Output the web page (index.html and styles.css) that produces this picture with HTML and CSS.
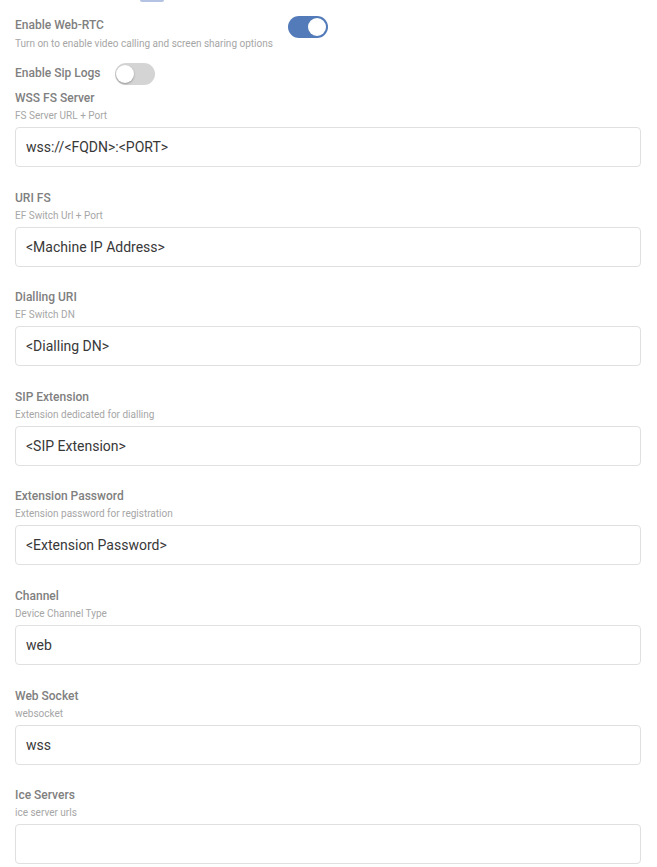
FILE: index.html
```html
<!DOCTYPE html>
<html lang="en">
<head>
  <meta charset="UTF-8" />
  <meta name="viewport" content="width=device-width, initial-scale=1" />
  <title>Web-RTC Settings</title>
  <link rel="stylesheet" href="styles.css">
</head>
<body>

<div class="settings">
  <div class="top-tab"></div>

  <div class="switch-row rtc">
    <div>
      <div class="label">Enable Web-RTC</div>
      <div class="hint">Turn on to enable video calling and screen sharing options</div>
    </div>
    <span class="toggle on"><span class="knob"></span></span>
  </div>

  <div class="switch-row logs">
    <div class="label">Enable Sip Logs</div>
    <span class="toggle"><span class="knob"></span></span>
  </div>

  <div class="field">
    <div class="label">WSS FS Server</div>
    <div class="hint">FS Server URL + Port</div>
    <input type="text" value="wss://<FQDN>:<PORT>">
  </div>

  <div class="field">
    <div class="label">URI FS</div>
    <div class="hint">EF Switch Url + Port</div>
    <input type="text" value="<Machine IP Address>">
  </div>

  <div class="field">
    <div class="label">Dialling URI</div>
    <div class="hint">EF Switch DN</div>
    <input type="text" value="<Dialling DN>">
  </div>

  <div class="field">
    <div class="label">SIP Extension</div>
    <div class="hint">Extension dedicated for dialling</div>
    <input type="text" value="<SIP Extension>">
  </div>

  <div class="field">
    <div class="label">Extension Password</div>
    <div class="hint">Extension password for registration</div>
    <input type="text" value="<Extension Password>">
  </div>

  <div class="field">
    <div class="label">Channel</div>
    <div class="hint">Device Channel Type</div>
    <input type="text" value="web">
  </div>

  <div class="field">
    <div class="label">Web Socket</div>
    <div class="hint">websocket</div>
    <input type="text" value="wss">
  </div>

  <div class="field">
    <div class="label">Ice Servers</div>
    <div class="hint">ice server urls</div>
    <input type="text" value="">
  </div>
</div>

</body>
</html>
```
FILE: styles.css
```css
body {
  margin: 0;
  background: #fff;
  font-family: Roboto, "Liberation Sans", sans-serif;
}
.settings {
  padding: 0 16px 0 15px;
}
.top-tab {
  width: 24px;
  height: 2px;
  margin-left: 125px;
  background-color: #b4c3e4;
  border-radius: 0 0 2px 2px;
}
.label {
  font-size: 12px;
  line-height: 16px;
  font-weight: 500;
  color: #808080;
}
.hint {
  font-size: 10px;
  line-height: 12px;
  color: #a6a6a6;
  margin-top: 5px;
}
.field .label {
  padding-top: 1px;
}
.field .hint {
  margin-top: 4px;
}
.switch-row {
  display: flex;
  align-items: flex-start;
}
.switch-row.rtc {
  margin-top: 15px;
}
.switch-row.rtc .toggle {
  margin-left: 15px;
  margin-top: -1px;
}
.switch-row.logs {
  margin-top: 13px;
  align-items: center;
}
.switch-row.logs .label {
  margin-top: -2px;
}
.switch-row.logs .toggle {
  margin-left: 15px;
}
.toggle {
  position: relative;
  display: inline-block;
  width: 40px;
  height: 22px;
  border-radius: 11px;
  background-color: #d4d4d4;
  flex-shrink: 0;
}
.toggle.on {
  background-color: #537bb9;
}
.knob {
  position: absolute;
  top: 2px;
  left: 1px;
  width: 18px;
  height: 18px;
  border-radius: 50%;
  background: #fff;
  box-shadow: 0 1px 2px rgba(0, 0, 0, 0.3);
}
.toggle.on .knob {
  left: 20px;
  box-shadow: none;
}
.field {
  margin-top: 4px;
  margin-bottom: 21.6px;
}
.field input {
  display: block;
  box-sizing: border-box;
  width: 100%;
  height: 40px;
  margin-top: 5px;
  padding: 0 10px;
  border: 1px solid #e0e0e0;
  border-radius: 4px;
  font-family: Roboto, "Liberation Sans", sans-serif;
  font-size: 14px;
  color: #383838;
  outline: none;
}
.field + .field {
  margin-top: 0;
}
```
